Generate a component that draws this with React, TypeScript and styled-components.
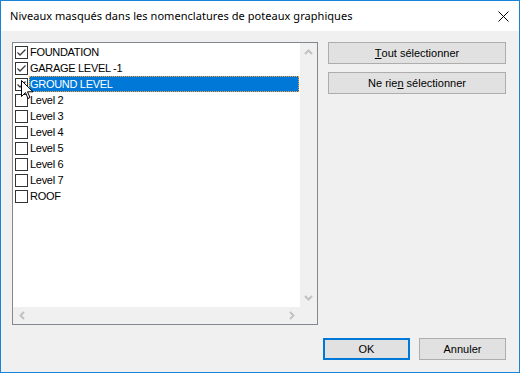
import * as React from "react";
import styled, { createGlobalStyle } from "styled-components";

const GlobalStyle = createGlobalStyle`
  html, body {
    margin: 0;
    padding: 0;
    background: #f0f0f0;
  }
  * {
    box-sizing: border-box;
  }
`;

const levels = [
  { name: "FOUNDATION", checked: true },
  { name: "GARAGE LEVEL -1", checked: true },
  { name: "GROUND LEVEL", checked: true, selected: true },
  { name: "Level 2", checked: false },
  { name: "Level 3", checked: false },
  { name: "Level 4", checked: false },
  { name: "Level 5", checked: false },
  { name: "Level 6", checked: false },
  { name: "Level 7", checked: false },
  { name: "ROOF", checked: false },
];

const Window = styled.div`
  position: relative;
  width: 520px;
  height: 373px;
  border: 1px solid #1883d7;
  background: #f0f0f0;
  display: flex;
  flex-direction: column;
  font-family: "Liberation Sans", Arial, sans-serif;
  font-size: 11px;
  color: #000;
`;

const TitleBar = styled.div`
  height: 30px;
  background: #fff;
  display: flex;
  align-items: center;
  justify-content: space-between;
  padding-left: 9px;
`;

const Title = styled.span`
  font-family: "Noto Sans", "Open Sans", sans-serif;
  font-size: 11px;
  letter-spacing: 0.05px;
  color: #000;
  margin-top: -1px;
`;

const CloseButton = styled.div`
  width: 32px;
  height: 30px;
  display: flex;
  align-items: center;
  justify-content: center;
`;

const Body = styled.div`
  flex: 1;
  padding: 11px 13px 12px 11px;
  display: grid;
  grid-template-columns: 306px 178px;
  grid-template-rows: 283px 22px;
  column-gap: 10px;
  row-gap: 13px;
`;

const ListBox = styled.div`
  position: relative;
  border: 1px solid #828790;
  background: #f0f0f0;
  display: grid;
  grid-template-columns: 287px 17px;
  grid-template-rows: 264px 17px;
`;

const Items = styled.div`
  background: #fff;
  padding-top: 1px;
  overflow: hidden;
`;

const Row = styled.div`
  height: 16px;
  display: flex;
  align-items: center;
  padding-left: 2px;
`;

const Box = styled.span`
  width: 13px;
  height: 13px;
  border: 1px solid #333;
  background: #fff;
  flex: none;
  display: flex;
  align-items: center;
  justify-content: center;
`;

const Label = styled.span<{ $selected?: boolean }>`
  flex: 1;
  height: 16px;
  line-height: 15px;
  margin-left: 1px;
  margin-right: 1px;
  padding-left: 1px;
  white-space: nowrap;
  letter-spacing: -0.3px;
  color: ${(p) => (p.$selected ? "#fff" : "#000")};
  background: ${(p) => (p.$selected ? "#0078d7" : "transparent")};
  border: 1px dotted ${(p) => (p.$selected ? "#f7a23c" : "transparent")};
  border-left-width: 0;
  border-right-width: 1px;
  ${(p) => p.$selected && "border-left: 1px dotted #f7a23c; padding-left: 0;"}
`;

const ScrollV = styled.div`
  background: #f0f0f0;
  display: flex;
  flex-direction: column;
  justify-content: space-between;
  align-items: center;
  padding: 6px 0 6px;
`;

const ScrollH = styled.div`
  background: #f0f0f0;
  display: flex;
  justify-content: space-between;
  align-items: center;
  padding: 0 5px 0 6px;
`;

const Corner = styled.div`
  background: #f0f0f0;
`;

const ButtonColumn = styled.div`
  display: flex;
  flex-direction: column;
  gap: 8px;
`;

const Button = styled.button<{ $default?: boolean; $width?: number }>`
  width: ${(p) => (p.$width ? `${p.$width}px` : "100%")};
  height: 22px;
  margin: 0;
  padding: 0;
  background: #e1e1e1;
  border: ${(p) => (p.$default ? "2px solid #0078d7" : "1px solid #adadad")};
  font-family: "Liberation Sans", Arial, sans-serif;
  font-size: 11px;
  color: #000;
  display: flex;
  align-items: center;
  justify-content: center;
  border-radius: 0;
  outline: none;
`;

const Key = styled.span`
  text-decoration: underline;
  text-underline-offset: 1px;
`;

const Footer = styled.div`
  grid-column: 1 / span 2;
  display: flex;
  justify-content: flex-end;
  gap: 9px;
`;

const Cursor = styled.svg`
  position: absolute;
  left: 8px;
  top: 37px;
  pointer-events: none;
`;

const Check = () => (
  <svg width="11" height="11" viewBox="0 0 11 11">
    <polyline points="1.5,5.5 4,8 9.5,2.5" fill="none" stroke="#3c3c3c" strokeWidth="1.3" />
  </svg>
);

const Chevron = ({ dir }: { dir: "up" | "down" | "left" | "right" }) => {
  const pts = {
    up: "1,5 4.5,1.5 8,5",
    down: "1,1 4.5,4.5 8,1",
    left: "5,1 1.5,4.5 5,8",
    right: "1,1 4.5,4.5 1,8",
  }[dir];
  const vertical = dir === "up" || dir === "down";
  return (
    <svg width={vertical ? 9 : 6} height={vertical ? 6 : 9}>
      <polyline points={pts} fill="none" stroke="#c2c2c2" strokeWidth="2" />
    </svg>
  );
};

export default function App() {
  return (
    <>
      <GlobalStyle />
      <Window>
        <TitleBar>
          <Title>Niveaux masqués dans les nomenclatures de poteaux graphiques</Title>
          <CloseButton>
            <svg width="11" height="11" viewBox="0 0 11 11">
              <path d="M0.5 0.5 L10.5 10.5 M10.5 0.5 L0.5 10.5" stroke="#000" strokeWidth="1" />
            </svg>
          </CloseButton>
        </TitleBar>
        <Body>
          <ListBox>
            <Items>
              {levels.map((l) => (
                <Row key={l.name}>
                  <Box>{l.checked && <Check />}</Box>
                  <Label $selected={l.selected}>{l.name}</Label>
                </Row>
              ))}
            </Items>
            <ScrollV>
              <Chevron dir="up" />
              <Chevron dir="down" />
            </ScrollV>
            <ScrollH>
              <Chevron dir="left" />
              <Chevron dir="right" />
            </ScrollH>
            <Corner />
            <Cursor width="13" height="21" viewBox="0 0 13 21">
              <path
                d="M0.5 0.5 L0.5 16.5 L4.5 12.5 L7 18.5 L9 17.5 L6.5 11.8 L12 11.8 Z"
                fill="#fff"
                stroke="#000"
                strokeWidth="1"
              />
            </Cursor>
          </ListBox>
          <ButtonColumn>
            <Button>
              <Key>T</Key>out sélectionner
            </Button>
            <Button>
              Ne rie<Key>n</Key>&nbsp;sélectionner
            </Button>
          </ButtonColumn>
          <Footer>
            <Button $default $width={87}>OK</Button>
            <Button $width={87}>Annuler</Button>
          </Footer>
        </Body>
      </Window>
    </>
  );
}
